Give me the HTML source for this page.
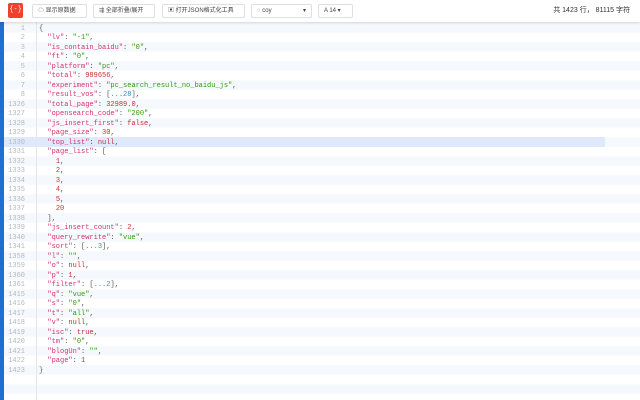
<!DOCTYPE html>
<html><head><meta charset="utf-8"><style>
*{margin:0;padding:0;box-sizing:border-box}
body{width:640px;height:400px;overflow:hidden;background:#fff;font-family:"Liberation Sans","Noto Sans CJK SC",sans-serif;position:relative}
.tb{position:absolute;left:0;top:0;width:640px;height:22px;background:#fff;box-shadow:0 1px 2px rgba(0,0,0,.18);z-index:3}
.logo{position:absolute;left:8px;top:3px;width:15px;height:15px;background:#f0412b;border-radius:2px;color:#fff;font-size:7px;line-height:15px;text-align:center;font-family:"Liberation Mono",monospace}
.btn{position:absolute;top:4px;height:14px;border:1px solid #dcdfe6;border-radius:2px;font-size:6px;color:#444;line-height:12px;padding-left:5px;white-space:nowrap}
.cnt{position:absolute;right:10px;top:5px;font-size:7px;color:#333}
.main{position:absolute;left:0;top:22px;width:640px;height:378px;
background:repeating-linear-gradient(#f5f8fc 0,#f5f8fc 9.5px,#fff 9.5px,#fff 19px);background-position:0 1.25px}
.bar{position:absolute;left:0;top:22px;width:4px;height:378px;background:#1f6fcf}
.sep{position:absolute;left:36px;top:22px;width:1px;height:378px;background:#e3e6ea}
.hl{position:absolute;left:4px;top:137.25px;width:601px;height:9.5px;background:#deeafb}
.code{position:absolute;left:0;top:24.75px;font-family:"Liberation Mono",monospace;font-size:7px;line-height:9.5px}
.code div{height:9.5px;white-space:pre}
.ln{display:inline-block;width:25px;text-align:right;color:#b5b9be;margin-right:14px;vertical-align:top}
.k{color:#d6316b}.s{color:#2f9c0a}.n{color:#c92c2c}.p{color:#555}.b{color:#1990d8}
</style></head><body>
<div class="tb">
<div class="logo">{-}</div>
<div class="btn" style="left:32px;width:55px">☁ 显示原数据</div>
<div class="btn" style="left:93px;width:62px">⇶ 全部折叠/展开</div>
<div class="btn" style="left:162px;width:83px">▣ 打开JSON格式化工具</div>
<div class="btn" style="left:251px;width:61px">◌ coy<span style="position:absolute;right:5px">▾</span></div>
<div class="btn" style="left:318px;width:35px">A 14 ▾</div>
<div class="cnt">共 1423 行， 81115 字符</div>
</div>
<div class="main"></div>
<div class="hl"></div>
<div class="bar"></div>
<div class="sep"></div>
<div class="code">
<div><span class="ln">1</span><span class="p">{</span></div>
<div><span class="ln">2</span>  <span class="k">"lv"</span><span class="p">: </span><span class="s">"-1"</span><span class="p">,</span></div>
<div><span class="ln">3</span>  <span class="k">"is_contain_baidu"</span><span class="p">: </span><span class="s">"0"</span><span class="p">,</span></div>
<div><span class="ln">4</span>  <span class="k">"ft"</span><span class="p">: </span><span class="s">"0"</span><span class="p">,</span></div>
<div><span class="ln">5</span>  <span class="k">"platform"</span><span class="p">: </span><span class="s">"pc"</span><span class="p">,</span></div>
<div><span class="ln">6</span>  <span class="k">"total"</span><span class="p">: </span><span class="n">989656</span><span class="p">,</span></div>
<div><span class="ln">7</span>  <span class="k">"experiment"</span><span class="p">: </span><span class="s">"pc_search_result_no_baidu_js"</span><span class="p">,</span></div>
<div><span class="ln">8</span>  <span class="k">"result_vos"</span><span class="p">: [</span><span class="b">...28</span><span class="p">],</span></div>
<div><span class="ln">1326</span>  <span class="k">"total_page"</span><span class="p">: </span><span class="n">32989.0</span><span class="p">,</span></div>
<div><span class="ln">1327</span>  <span class="k">"opensearch_code"</span><span class="p">: </span><span class="s">"200"</span><span class="p">,</span></div>
<div><span class="ln">1328</span>  <span class="k">"js_insert_first"</span><span class="p">: </span><span class="n">false</span><span class="p">,</span></div>
<div><span class="ln">1329</span>  <span class="k">"page_size"</span><span class="p">: </span><span class="n">30</span><span class="p">,</span></div>
<div><span class="ln">1330</span>  <span class="k">"top_list"</span><span class="p">: </span><span class="n">null</span><span class="p">,</span></div>
<div><span class="ln">1331</span>  <span class="k">"page_list"</span><span class="p">: [</span></div>
<div><span class="ln">1332</span>    <span class="n">1</span><span class="p">,</span></div>
<div><span class="ln">1333</span>    <span class="n">2</span><span class="p">,</span></div>
<div><span class="ln">1334</span>    <span class="n">3</span><span class="p">,</span></div>
<div><span class="ln">1335</span>    <span class="n">4</span><span class="p">,</span></div>
<div><span class="ln">1336</span>    <span class="n">5</span><span class="p">,</span></div>
<div><span class="ln">1337</span>    <span class="n">20</span></div>
<div><span class="ln">1338</span>  <span class="p">],</span></div>
<div><span class="ln">1339</span>  <span class="k">"js_insert_count"</span><span class="p">: </span><span class="n">2</span><span class="p">,</span></div>
<div><span class="ln">1340</span>  <span class="k">"query_rewrite"</span><span class="p">: </span><span class="s">"vue"</span><span class="p">,</span></div>
<div><span class="ln">1341</span>  <span class="k">"sort"</span><span class="p">: [</span><span class="b">...3</span><span class="p">],</span></div>
<div><span class="ln">1358</span>  <span class="k">"l"</span><span class="p">: </span><span class="s">""</span><span class="p">,</span></div>
<div><span class="ln">1359</span>  <span class="k">"o"</span><span class="p">: </span><span class="n">null</span><span class="p">,</span></div>
<div><span class="ln">1360</span>  <span class="k">"p"</span><span class="p">: </span><span class="n">1</span><span class="p">,</span></div>
<div><span class="ln">1361</span>  <span class="k">"filter"</span><span class="p">: [</span><span class="b">...2</span><span class="p">],</span></div>
<div><span class="ln">1415</span>  <span class="k">"q"</span><span class="p">: </span><span class="s">"vue"</span><span class="p">,</span></div>
<div><span class="ln">1416</span>  <span class="k">"s"</span><span class="p">: </span><span class="s">"0"</span><span class="p">,</span></div>
<div><span class="ln">1417</span>  <span class="k">"t"</span><span class="p">: </span><span class="s">"all"</span><span class="p">,</span></div>
<div><span class="ln">1418</span>  <span class="k">"v"</span><span class="p">: </span><span class="n">null</span><span class="p">,</span></div>
<div><span class="ln">1419</span>  <span class="k">"isc"</span><span class="p">: </span><span class="n">true</span><span class="p">,</span></div>
<div><span class="ln">1420</span>  <span class="k">"tm"</span><span class="p">: </span><span class="s">"0"</span><span class="p">,</span></div>
<div><span class="ln">1421</span>  <span class="k">"blogUn"</span><span class="p">: </span><span class="s">""</span><span class="p">,</span></div>
<div><span class="ln">1422</span>  <span class="k">"page"</span><span class="p">: </span><span class="n">1</span></div>
<div><span class="ln">1423</span><span class="p">}</span></div>
</div>
</body></html>
